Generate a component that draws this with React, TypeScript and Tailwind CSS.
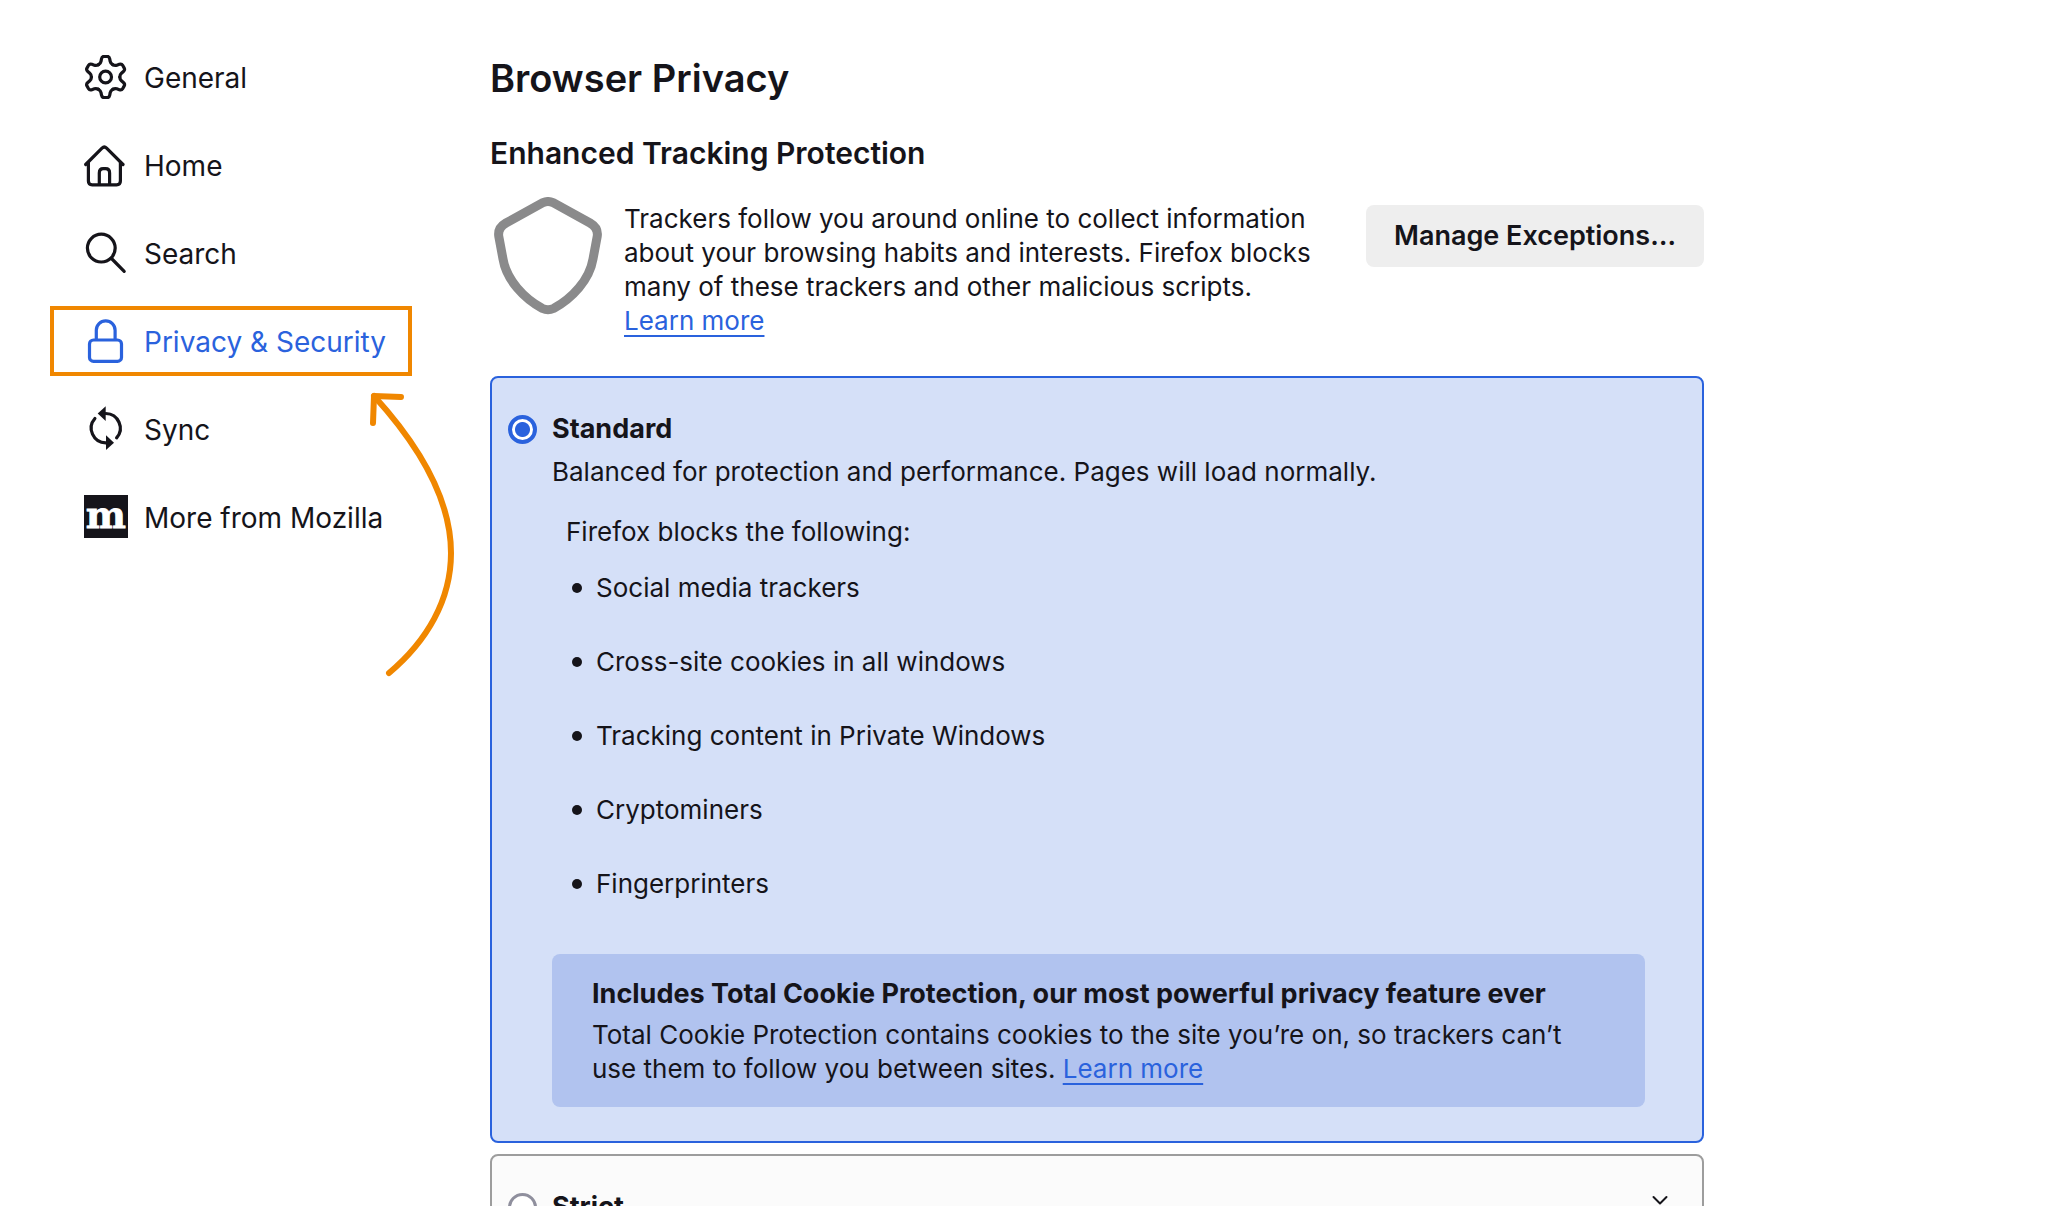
import React, { useState } from 'react'

const GearIcon = () => (
  <svg viewBox="0 0 44 44" className="size-11 shrink-0" fill="none" stroke="currentColor" strokeWidth="3.2">
    <g transform="translate(21.6 22)" strokeLinecap="round">
      {[0, 60, 120, 180, 240, 300].map((angle) => (
        <path
          key={angle}
          transform={`rotate(${angle})`}
          d="M-7.1 -12.3C-5.6 -13.2 -4.9 -14 -4.6 -15.6L-4.1 -18.2Q-3.6 -20.6 -1.6 -20.6H1.6Q3.6 -20.6 4.1 -18.2L4.6 -15.6C4.9 -14 5.6 -13.2 7.1 -12.3"
        />
      ))}
      <circle r="5.9" />
    </g>
  </svg>
)

const HomeIcon = () => (
  <svg viewBox="0 0 44 44" className="size-11 shrink-0" fill="none" stroke="currentColor" strokeWidth="3.2" strokeLinecap="round">
    <path d="M1.7 21.5L18 5.1Q20.3 2.9 22.6 5.1L39 21.5" />
    <path d="M4.4 19.5V38Q4.4 41.8 8.2 41.8H32.6Q36.4 41.8 36.4 38V19.5" />
    <path d="M15.3 41.5V30Q15.3 25.7 19.2 25.7H21.6Q25.6 25.7 25.6 30V41.5" />
  </svg>
)

const SearchIcon = () => (
  <svg viewBox="0 0 44 44" className="size-11 shrink-0" fill="none" stroke="currentColor" strokeWidth="3.2" strokeLinecap="round">
    <circle cx="17.3" cy="17.1" r="13.9" />
    <path d="M27.5 27.5L40.2 40.3" />
  </svg>
)

const LockIcon = () => (
  <svg viewBox="0 0 44 44" className="size-11 shrink-0" fill="none" stroke="currentColor" strokeWidth="3.2">
    <rect x="5.5" y="21" width="32" height="21.4" rx="4" />
    <path d="M12.3 21V11.2A9.4 9.4 0 0 1 31.1 11.2V21" />
  </svg>
)

const SyncIcon = () => (
  <svg viewBox="0 0 44 44" className="size-11 shrink-0 overflow-visible" fill="none" stroke="currentColor" strokeWidth="3.2" strokeLinecap="round">
    <path d="M21.8 6.5A14.7 14.7 0 0 1 32.6 30.9" />
    <path d="M10.9 11.5A14.7 14.7 0 0 0 21.8 35.9" />
    <path d="M21.7 -0.7V13.9L13.7 6.6Z" fill="currentColor" stroke="none" />
    <path d="M22 28.3V43.1L30 35.7Z" fill="currentColor" stroke="none" />
  </svg>
)

const MozillaIcon = () => (
  <svg viewBox="0 0 44 44" className="size-11 shrink-0 overflow-visible">
    <rect width="44" height="43" fill="currentColor" />
    <text
      x="21.8"
      y="33"
      textAnchor="middle"
      fontSize="38"
      fontWeight="700"
      fill="#fff"
      stroke="#fff"
      strokeWidth="0.8"
      fontFamily="DejaVu Serif, serif"
    >
      m
    </text>
  </svg>
)

const ShieldIcon = () => (
  <svg viewBox="0 0 108 118" className="ml-1 h-[118px] w-[108px] shrink-0" fill="none" stroke="#8a8a8b" strokeWidth="9">
    <path d="M49 5.6Q54 3.4 59 5.6L96 26Q104.6 31 103.2 39.5L99 62C95.5 83 78 101.500 59.500 111.500Q54 114 48.500 111.500C30 101.500 12.500 83 9 62L4.800 39.500Q3.400 31 12 26Z" />
  </svg>
)

const categories = [
  { name: 'General', icon: GearIcon },
  { name: 'Home', icon: HomeIcon },
  { name: 'Search', icon: SearchIcon },
  { name: 'Privacy & Security', icon: LockIcon },
  { name: 'Sync', icon: SyncIcon },
  { name: 'More from Mozilla', icon: MozillaIcon },
]

const blocked = [
  'Social media trackers',
  'Cross-site cookies in all windows',
  'Tracking content in Private Windows',
  'Cryptominers',
  'Fingerprinters',
]

const Sidebar = () => (
  <nav className="relative w-[490px] shrink-0 pl-[50px] pt-[42px]">
    <ul className="flex flex-col items-start gap-[18px]">
      {categories.map(({ name, icon: Icon }) => {
        const active = name === 'Privacy & Security'
        return (
          <li key={name}>
            <a
              href="#"
              className={`flex h-[70px] items-center gap-4 border-4 pl-[30px] pr-[22px] text-[28px] leading-9 ${
                active ? 'border-[#f08700] text-[#2a62dd]' : 'border-transparent'
              }`}
            >
              <Icon />
              <span className="pt-0.5">{name}</span>
            </a>
          </li>
        )
      })}
    </ul>
    {/* hand drawn arrow that points at the active category */}
    <svg
      viewBox="0 0 90 290"
      className="pointer-events-none absolute left-[368px] top-[390px] h-[290px] w-[90px]"
      fill="none"
      stroke="#f08700"
      strokeWidth="6"
      strokeLinecap="round"
      strokeLinejoin="round"
    >
      <path d="M5 33L6 6L33 7" />
      <path d="M6 6C57 62 83 115 83 163C83 210 59 251 21 283" />
    </svg>
  </nav>
)

const LearnMore = () => (
  <a href="#" className="whitespace-nowrap text-[#2a62dd] underline decoration-2 underline-offset-[5px]">
    Learn more
  </a>
)

const radioClass =
  'size-[29px] shrink-0 appearance-none rounded-full border-[3px] border-[#8f8f9d] bg-white checked:border-4 checked:border-[#2a62dd] checked:bg-[radial-gradient(circle,#2a62dd_7px,white_8px)]'

const App = () => {
  const [level, setLevel] = useState('standard')

  return (
    <div className="h-screen bg-white pb-1.5 font-['Inter',sans-serif] text-[26px] leading-[34px] text-[#15141a]">
      <div className="flex h-full overflow-hidden">
        <Sidebar />
        <main className="min-w-0 max-w-[1214px] flex-1 pt-[54px]">
          <h1 className="text-[38px] font-semibold leading-[48px]">Browser Privacy</h1>
          <h2 className="mt-[31px] text-[30px] font-semibold leading-10">Enhanced Tracking Protection</h2>

          <div className="mt-6 flex items-start">
            <ShieldIcon />
            <p className="ml-[22px] mt-[5px] flex-1">
              Trackers follow you around online to collect information about your browsing habits and interests. Firefox
              blocks many of these trackers and other malicious scripts. <LearnMore />
            </p>
            <button className="ml-6 mt-2 h-[62px] w-[338px] shrink-0 rounded-lg bg-[#eeeeee] text-[27px] font-semibold">
              Manage Exceptions…
            </button>
          </div>

          <section className="mt-[38px] rounded-lg border-2 border-[#2a62dd] bg-[#d5e0f8] pb-[34px] pl-4 pr-[57px] pt-[34px]">
            <label className="flex items-center gap-[15px] text-[27px] font-bold">
              <input
                type="radio"
                name="level"
                className={radioClass}
                checked={level === 'standard'}
                onChange={() => setLevel('standard')}
              />
              Standard
            </label>
            <div className="pl-11">
              <p className="mt-[9px]">Balanced for protection and performance. Pages will load normally.</p>
              <p className="ml-3.5 mt-[26px]">Firefox blocks the following:</p>
              <ul className="ml-5 mt-[22px] flex flex-col gap-10">
                {blocked.map((item) => (
                  <li key={item} className="flex items-center gap-3.5">
                    <span className="size-2.5 rounded-full bg-[#15141a]" />
                    {item}
                  </li>
                ))}
              </ul>
              <div className="mt-[53px] rounded-lg bg-[#b1c3ef] pb-[21px] pl-10 pr-10 pt-[23px]">
                <h3 className="text-[27px] font-bold">
                  Includes Total Cookie Protection, our most powerful privacy feature ever
                </h3>
                <p className="mt-[7px]">
                  Total Cookie Protection contains cookies to the site you’re on, so trackers can’t use them to follow
                  you between sites. <LearnMore />
                </p>
              </div>
            </div>
          </section>

          <section className="mt-[11px] flex items-center justify-between rounded-lg border-2 border-[#9d9d9d] bg-[#fbfbfb] py-[34px] pl-4 pr-[34px]">
            <label className="flex items-center gap-[15px] text-[27px] font-bold">
              <input
                type="radio"
                name="level"
                className={radioClass}
                checked={level === 'strict'}
                onChange={() => setLevel('strict')}
              />
              Strict
            </label>
            <button aria-label="Show details" className="h-[34px]">
              <svg viewBox="0 0 16 34" className="h-[34px] w-4" fill="none" stroke="currentColor" strokeWidth="2">
                <path d="M1.5 7L8 13.5L14.5 7" strokeLinecap="round" strokeLinejoin="round" />
              </svg>
            </button>
          </section>
        </main>
      </div>
    </div>
  )
}

export default App
